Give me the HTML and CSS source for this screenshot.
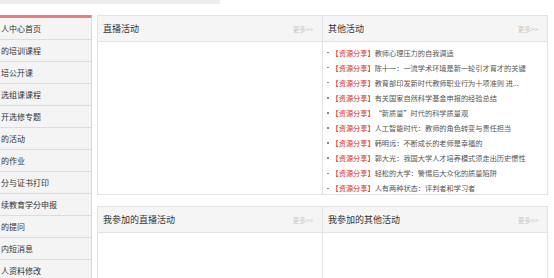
FILE: index.html
```html
<!DOCTYPE html>
<html lang="zh-CN">
<head>
  <meta charset="UTF-8" />
  <meta name="viewport" content="width=device-width, initial-scale=1" />
  <title>个人中心</title>
  <link rel="stylesheet" href="styles.css">
</head>
<body>

<!-- top strip -->
<div class="crumb"></div>

<div class="page">
  <!-- Sidebar -->
  <ul class="side-menu">
    <li><a href="#">人中心首页</a></li>
    <li><a href="#">的培训课程</a></li>
    <li><a href="#">培公开课</a></li>
    <li><a href="#">选组课课程</a></li>
    <li><a href="#">开选修专题</a></li>
    <li><a href="#">的活动</a></li>
    <li><a href="#">的作业</a></li>
    <li><a href="#">分与证书打印</a></li>
    <li><a href="#">续教育学分申报</a></li>
    <li><a href="#">的提问</a></li>
    <li><a href="#">内短消息</a></li>
    <li><a href="#">人资料修改</a></li>
  </ul>

  <!-- Main -->
  <div class="main">
    <div class="box-row">
      <div class="box">
        <div class="box-head">
          <span class="box-title">直播活动</span>
          <a class="more" href="#">更多&gt;&gt;</a>
        </div>
        <div class="box-body"></div>
      </div>
      <div class="box">
        <div class="box-head">
          <span class="box-title">其他活动</span>
          <a class="more" href="#">更多&gt;&gt;</a>
        </div>
        <div class="box-body">
          <ul class="news-list">
            <li><span class="tag">【资源分享】</span>教师心理压力的自我调适</li>
            <li><span class="tag">【资源分享】</span>陈十一：一流学术环境是新一轮引才育才的关键</li>
            <li><span class="tag">【资源分享】</span>教育部印发新时代教师职业行为十项准则 进...</li>
            <li><span class="tag">【资源分享】</span>有关国家自然科学基金申报的经验总结</li>
            <li><span class="tag">【资源分享】</span>“新质量”时代的科学质量观</li>
            <li><span class="tag">【资源分享】</span>人工智能时代：教师的角色转变与责任担当</li>
            <li><span class="tag">【资源分享】</span>韩明远：不断成长的老师是幸福的</li>
            <li><span class="tag">【资源分享】</span>郭大光：我国大学人才培养模式须走出历史惯性</li>
            <li><span class="tag">【资源分享】</span>轻松的大学：警惕后大众化的质量陷阱</li>
            <li><span class="tag">【资源分享】</span>人有两种状态：评判者和学习者</li>
          </ul>
        </div>
      </div>
    </div>

    <div class="box-row">
      <div class="box">
        <div class="box-head">
          <span class="box-title">我参加的直播活动</span>
          <a class="more" href="#">更多&gt;&gt;</a>
        </div>
        <div class="box-body"></div>
      </div>
      <div class="box">
        <div class="box-head">
          <span class="box-title">我参加的其他活动</span>
          <a class="more" href="#">更多&gt;&gt;</a>
        </div>
        <div class="box-body"></div>
      </div>
    </div>
  </div>
</div>

</body>
</html>
```

FILE: styles.css
```css
body {
  font-family: "Noto Sans CJK SC", "Liberation Sans", sans-serif;
  margin: 0;
  background-color: #fff;
  color: #333;
  overflow: hidden;
}

a {
  text-decoration: none;
  color: inherit;
}

.crumb {
  width: 220px;
  height: 4px;
  background-color: #eeeeee;
}

.page {
  display: flex;
  align-items: flex-start;
  gap: 5px;
  margin-top: 11px;
}

/* Sidebar */
.side-menu {
  list-style: none;
  margin: 0;
  padding: 0;
  width: 91px;
  background-color: #f4f4f4;
  border-top: 3px solid #e27f7f;
  border-right: 1px solid #dcdcdc;
}

.side-menu li {
  height: 21px;
  line-height: 21px;
  border-bottom: 1px solid #dcdcdc;
  padding-left: 1px;
  font-size: 8px;
  white-space: nowrap;
}

.side-menu a {
  color: #333;
}

/* Main */
.main {
  width: 451px;
  display: flex;
  flex-direction: column;
  gap: 11px;
}

.box-row {
  display: grid;
  grid-template-columns: 224px 1fr;
  border: 1px solid #e2e2e2;
}

.box + .box {
  border-left: 1px solid #e2e2e2;
}

.box-head {
  height: 25px;
  display: flex;
  align-items: center;
  justify-content: space-between;
  padding: 0 9px 0 5px;
  background-color: #f5f5f5;
  border-bottom: 1px solid #e2e2e2;
}

.box-title {
  font-size: 9px;
  color: #333;
}

.more {
  font-size: 6.5px;
  color: #c8c8c8;
}

.box-body {
  height: 152px;
}

.news-list {
  list-style: none;
  margin: 0;
  padding: 3px 0 0 4px;
}

.news-list li {
  display: flex;
  align-items: center;
  height: 15.1px;
  font-size: 7.2px;
  color: #555;
  white-space: nowrap;
}

.news-list li::before {
  content: "";
  width: 1.5px;
  height: 1.5px;
  background-color: #888;
  margin-right: 3px;
}

.news-list .tag {
  color: #d8302b;
}
```
